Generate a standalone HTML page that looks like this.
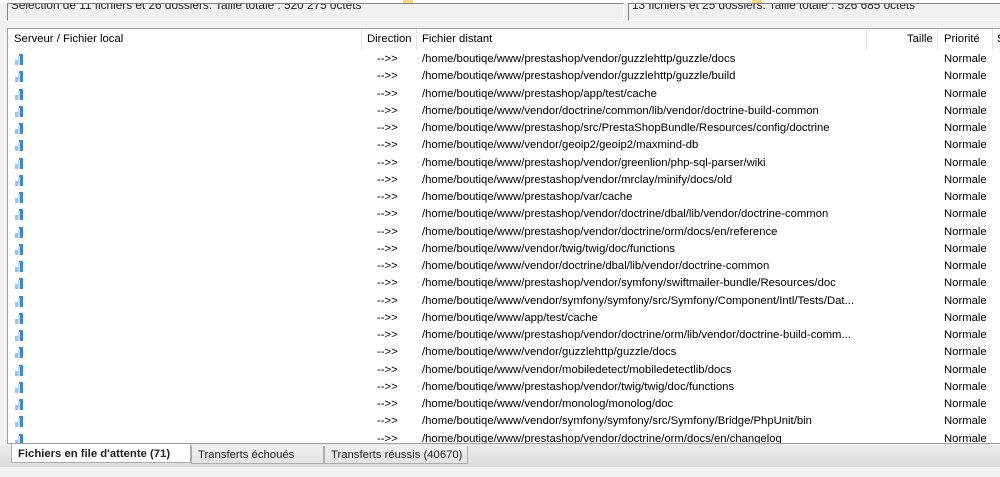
<!DOCTYPE html>
<html><head><meta charset="utf-8"><style>
*{margin:0;padding:0;box-sizing:border-box}
body{width:1000px;height:477px;overflow:hidden;background:#f0f0f0;font-family:"Liberation Sans","DejaVu Sans",sans-serif;font-size:11.3px;color:#000;position:relative}
.abs{position:absolute}
.stat{top:3px;height:18px;background:#f0f0f0;border-top:1px solid #828282;border-left:1px solid #828282;border-right:1px solid #fff;border-bottom:1px solid #fff;overflow:hidden;white-space:nowrap}
.stat span{position:absolute;left:3px;top:-6px;font-size:11.8px;color:#222}
#list{left:7px;top:28px;width:1000px;height:416px;background:#fff;border:1px solid #a0a0a0;border-right:none;overflow:hidden}
.hdr{position:absolute;top:0;height:21px;width:100%;background:#fff}
.hdr div{position:absolute;top:4px;white-space:nowrap}
.sep{position:absolute;top:0;width:1px;height:21px;background:#e5e5e5}
.row{position:absolute;left:0;width:100%;height:17px;white-space:nowrap}
.row div{position:absolute;top:2px}
.tab{position:absolute;top:446px;height:18px;border:1px solid #adadad;border-top:none;background:linear-gradient(#f0f0f0,#e3e3e3);padding:2px 0 0 6px;white-space:nowrap;color:#222}
</style></head><body>
<div class="abs" style="left:0;top:0;width:1000px;height:3px;background:#fff"></div>
<div class="abs" style="left:403px;top:0;width:10px;height:3px;background:#f5d77c"></div>
<div class="abs" style="left:752px;top:0;width:10px;height:3px;background:#f5d77c"></div>
<div class="abs stat" style="left:7px;width:617px"><span>Sélection de 11 fichiers et 26 dossiers. Taille totale : 520 275 octets</span></div>
<div class="abs stat" style="left:628px;width:380px"><span>13 fichiers et 25 dossiers. Taille totale : 526 685 octets</span></div>
<div class="abs" id="list">
<div class="hdr">
<div style="left:6px">Serveur / Fichier local</div>
<span class="sep" style="left:353px"></span>
<div style="left:359px">Direction</div>
<span class="sep" style="left:408px"></span>
<div style="left:414px">Fichier distant</div>
<span class="sep" style="left:858px"></span>
<div style="left:899px">Taille</div>
<span class="sep" style="left:929px"></span>
<div style="left:936px">Priorité</div>
<span class="sep" style="left:984px"></span>
<div style="left:989px">S</div>
</div>
<div id="rows"></div>
</div>
<div class="abs" style="left:0;top:444px;width:1000px;height:22px;background:linear-gradient(#ececec,#dcdcdc)"></div>
<div class="abs" style="left:0;top:466px;width:1000px;height:11px;background:#f0f0f0;border-top:1px solid #d8d8d8"></div>
<div class="tab" style="left:11px;width:180px;background:#fff;font-weight:bold;height:19px;top:444px;padding-top:4px">Fichiers en file d'attente (71)</div>
<div class="tab" style="left:191px;width:133px;padding-top:3px">Transferts échoués</div>
<div class="tab" style="left:324px;width:144px;padding-top:3px">Transferts réussis (40670)</div>
<script>
var p=["/home/boutiqe/www/prestashop/vendor/guzzlehttp/guzzle/docs","/home/boutiqe/www/prestashop/vendor/guzzlehttp/guzzle/build","/home/boutiqe/www/prestashop/app/test/cache","/home/boutiqe/www/vendor/doctrine/common/lib/vendor/doctrine-build-common","/home/boutiqe/www/prestashop/src/PrestaShopBundle/Resources/config/doctrine","/home/boutiqe/www/vendor/geoip2/geoip2/maxmind-db","/home/boutiqe/www/prestashop/vendor/greenlion/php-sql-parser/wiki","/home/boutiqe/www/prestashop/vendor/mrclay/minify/docs/old","/home/boutiqe/www/prestashop/var/cache","/home/boutiqe/www/prestashop/vendor/doctrine/dbal/lib/vendor/doctrine-common","/home/boutiqe/www/prestashop/vendor/doctrine/orm/docs/en/reference","/home/boutiqe/www/vendor/twig/twig/doc/functions","/home/boutiqe/www/vendor/doctrine/dbal/lib/vendor/doctrine-common","/home/boutiqe/www/prestashop/vendor/symfony/swiftmailer-bundle/Resources/doc","/home/boutiqe/www/vendor/symfony/symfony/src/Symfony/Component/Intl/Tests/Dat...","/home/boutiqe/www/app/test/cache","/home/boutiqe/www/prestashop/vendor/doctrine/orm/lib/vendor/doctrine-build-comm...","/home/boutiqe/www/vendor/guzzlehttp/guzzle/docs","/home/boutiqe/www/vendor/mobiledetect/mobiledetectlib/docs","/home/boutiqe/www/prestashop/vendor/twig/twig/doc/functions","/home/boutiqe/www/vendor/monolog/monolog/doc","/home/boutiqe/www/vendor/symfony/symfony/src/Symfony/Bridge/PhpUnit/bin","/home/boutiqe/www/prestashop/vendor/doctrine/orm/docs/en/changelog"];
var h="";
var ic='<svg style="position:absolute;left:6px;top:2px" width="10" height="13" viewBox="0 0 10 13"><rect x="1" y="7" width="3" height="5" fill="#9cc1ea"/><rect x="5" y="1" width="4" height="11" fill="#3d86d9"/><rect x="4" y="3" width="2" height="9" fill="#c9def5"/></svg>';
for(var i=0;i<p.length;i++){var t=22+i*17.25;h+='<div class="row" style="top:'+t+'px">'+ic+'<div style="left:369px">--&gt;&gt;</div><div style="left:414px">'+p[i]+'</div><div style="left:936px">Normale</div></div>';}
document.getElementById("rows").innerHTML=h;
</script>
</body></html>
